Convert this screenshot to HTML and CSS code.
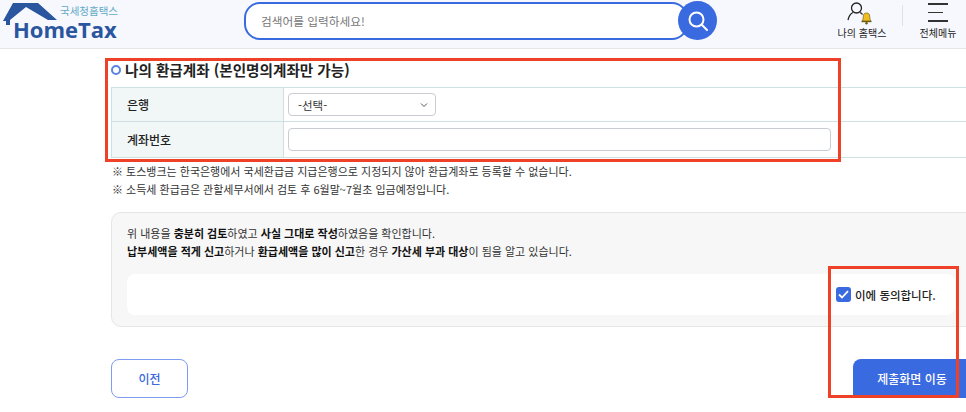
FILE: index.html
```html
<!DOCTYPE html>
<html lang="ko">
<head>
<meta charset="utf-8">
<title>HomeTax</title>
<link rel="stylesheet" href="styles.css">
</head>
<body>
<div class="page">
  <header class="header">
    <div class="logo">
      <svg class="logo-roof" width="60" height="26" viewBox="0 0 60 26"><path d="M3 21 L13 3 H38 L57 20 H48 L26 7 L10 20 V25 H6 V21 Z" fill="#2a559f"/></svg>
      <span class="logo-sub">국세청홈택스</span>
      <span class="logo-name">HomeTax</span>
    </div>
    <div class="search">
      <div class="search-box">검색어를 입력하세요!</div>
      <button class="search-btn" aria-label="검색">
        <svg width="24" height="24" viewBox="0 0 24 24" fill="none" stroke="#fff" stroke-width="2"><circle cx="10.5" cy="10.5" r="7"/><path d="M15.8 15.8 L21 21" stroke-linecap="round"/></svg>
      </button>
    </div>
    <nav class="util">
      <div class="util-item my">
        <svg width="26" height="24" viewBox="0 0 26 24" fill="none"><circle cx="9.5" cy="7" r="5" stroke="#222" stroke-width="1.3"/><path d="M1 19 C2 14 4 12.5 6 11.5 M13 11.5 C14 12 15 12.5 15.5 13.5" stroke="#222" stroke-width="1.3"/><path d="M15 20 C16.500 18.500 16 16 16.500 14 C17 12.500 18 12 19.500 12 C21 12 22 12.500 22.500 14 C23 16 22.500 18.500 24 20 Z" fill="#eebd1f" stroke="#5a4a10" stroke-width=".6"/><rect x="14.500" y="20" width="10" height="1.200" fill="#6b5a15"/><circle cx="19.500" cy="22.300" r="1.200" fill="#6b5a15"/></svg>
        <span>나의 홈택스</span>
      </div>
      <div class="util-divider"></div>
      <div class="util-item menu">
        <span class="burger"><i></i><i class="short"></i><i></i></span>
        <span>전체메뉴</span>
      </div>
    </nav>
  </header>

  <main class="main">
    <h2 class="title"><span class="bullet"></span>나의 환급계좌 (본인명의계좌만 가능)</h2>
    <div class="form-table">
      <div class="row row-bank">
        <div class="label">은행</div>
        <div class="cell">
          <div class="select"><span>-선택-</span>
            <svg width="8" height="6" viewBox="0 0 8 6" fill="none" stroke="#555" stroke-width="1"><path d="M1 1.500 L4 4.500 L7 1.500"/></svg>
          </div>
        </div>
      </div>
      <div class="row row-account">
        <div class="label">계좌번호</div>
        <div class="cell"><div class="input"></div></div>
      </div>
    </div>
    <ul class="notes">
      <li>※ 토스뱅크는 한국은행에서 국세환급금 지급은행으로 지정되지 않아 환급계좌로 등록할 수 없습니다.</li>
      <li>※ 소득세 환급금은 관할세무서에서 검토 후 6월말~7월초 입금예정입니다.</li>
    </ul>
    <section class="panel">
      <p class="confirm">위 내용을 <b>충분히 검토</b>하였고 <b>사실 그대로 작성</b>하였음을 확인합니다.</p>
      <p class="confirm"><b>납부세액을 적게 신고</b>하거나 <b>환급세액을 많이 신고</b>한 경우 <b>가산세 부과 대상</b>이 됨을 알고 있습니다.</p>
      <div class="agree">
        <span class="check"><svg width="11" height="9" viewBox="0 0 11 9" fill="none" stroke="#fff" stroke-width="1.800"><path d="M1 4.500 L4 7.500 L10 1.200"/></svg></span>
        <span>이에 동의합니다.</span>
      </div>
    </section>
    <div class="actions">
      <button class="btn-prev">이전</button>
      <button class="btn-next">제출화면 이동</button>
    </div>
  </main>
  <div class="mark mark-a"></div>
  <div class="mark mark-b"></div>
</div>
</body>
</html>
```
FILE: styles.css
```css
* { box-sizing: border-box; }
html, body { margin: 0; padding: 0; }
body { background: #fff; font-family: "Noto Sans CJK KR", "Noto Sans", sans-serif; color: #222; }
.page { position: relative; width: 966px; height: 412px; overflow: hidden; }

.header { display: flex; align-items: flex-start; height: 49px; background: #f7f8fe; border-bottom: 1px solid #e6e6e8; }
.logo { position: relative; width: 244px; height: 48px; flex: none; }
.logo-roof { position: absolute; left: 0; top: 0; }
.logo-sub { position: absolute; left: 60px; top: 5px; font-size: 10.500px; line-height: 12px; color: #62a9c4; white-space: nowrap; }
.logo-name { position: absolute; left: 13px; top: 18px; font-family: "Open Sans", sans-serif; font-weight: 700; font-size: 22px; line-height: 22px; color: #2a559f; white-space: nowrap; }

.search { display: flex; align-items: center; width: 474px; margin-top: 1px; flex: none; }
.search-box { width: 444px; height: 38px; padding-left: 15px; border: 2px solid #3a6ae0; border-radius: 16px; background: #fff; font-size: 11.700px; line-height: 34px; color: #777; flex: none; }
.search-btn { width: 39px; height: 39px; margin-left: -10px; border: 0; border-radius: 50%; background: #3a6ae0; display: flex; align-items: center; justify-content: center; padding: 0; flex: none; }

.util { display: flex; align-items: flex-start; margin-left: 118px; }
.util-item { display: flex; flex-direction: column; align-items: center; font-size: 10px; line-height: 14px; color: #222; white-space: nowrap; }
.util-item.my { width: 52px; padding-top: 1px; }
.util-item.my svg { margin-bottom: 1px; margin-left: -4px; }
.util-divider { width: 1px; height: 21px; margin: 5px 0 0 14px; background: #e0e1e6; }
.util-item.menu { width: 44px; margin-left: 13px; padding-top: 3px; }
.burger { display: flex; flex-direction: column; align-items: center; gap: 7px; width: 20px; height: 21px; margin-bottom: 2px; }
.burger i { display: block; width: 20px; height: 1.500px; background: #333; }
.burger i.short { width: 15px; margin-right: 5px; }

.main { padding: 11px 0 0 111px; width: 1000px; }
.title { display: flex; align-items: center; margin: 0; height: 20px; font-size: 14.600px; font-weight: 700; color: #222; line-height: 20px; white-space: nowrap; }
.bullet { width: 10px; height: 10px; border: 2.500px solid #5b82e0; border-radius: 50%; margin-right: 4px; background: #fff; flex: none; }

.form-table { margin-top: 7px; border-top: 1px solid #cfe0e2; }
.row { display: flex; border-bottom: 1px solid #cfe0e2; }
.row-bank { height: 34px; }
.row-account { height: 36px; }
.label { display: flex; align-items: center; width: 173px; flex: none; padding-left: 15px; background: #f1f7f7; border-left: 1px solid #cfe0e2; border-right: 1px solid #cfe0e2; font-size: 12px; font-weight: 500; color: #222; }
.cell { flex: 1; display: flex; align-items: center; padding-left: 4px; }
.select { display: flex; align-items: center; justify-content: space-between; width: 148px; height: 23px; padding: 0 7px 0 9px; border: 1px solid #c9ccd1; border-radius: 4px; font-size: 11.500px; color: #333; }
.input { width: 543px; height: 23px; border: 1px solid #c9ccd1; border-radius: 4px; background: #fff; }

.notes { list-style: none; margin: 4px 0 0; padding: 0 0 0 1px; font-size: 11px; line-height: 18px; color: #333; white-space: nowrap; }

.panel { position: relative; height: 115px; margin-top: 14px; padding: 11px 15px; background: #f7f7f7; border: 1px solid #e6e6e6; border-radius: 10px; }
.confirm { margin: 0; font-size: 11px; line-height: 18px; color: #333; white-space: nowrap; }
.confirm b { color: #111; font-weight: 700; }
.agree { display: flex; align-items: center; justify-content: flex-start; gap: 4px; width: 828px; height: 41px; margin-top: 14px; padding-left: 709px; background: #fff; border-radius: 8px; font-size: 11.500px; font-weight: 500; color: #222; white-space: nowrap; }
.check { display: flex; align-items: center; justify-content: center; width: 15px; height: 15px; border-radius: 3px; background: #3a6ae0; flex: none; }

.actions { display: flex; justify-content: flex-start; margin-top: 32px; }
.btn-prev { width: 77px; height: 39px; background: #fff; border: 1px solid #7f9cf0; border-radius: 8px; font: 500 12px "Noto Sans CJK KR", sans-serif; color: #3a6ae0; padding: 0; }
.btn-next { width: 130px; height: 39px; margin-left: 665px; background: #3a6ae0; border: 0; border-radius: 8px 0 0 0; font: 500 12px "Noto Sans CJK KR", sans-serif; color: #fff; padding: 0 12px 0 0; text-align: center; }

.mark { position: absolute; border: 3px solid #ef4128; pointer-events: none; }
.mark-a { left: 105px; top: 58px; width: 736px; height: 104px; }
.mark-b { left: 828px; top: 266px; width: 131px; height: 132px; }
```
